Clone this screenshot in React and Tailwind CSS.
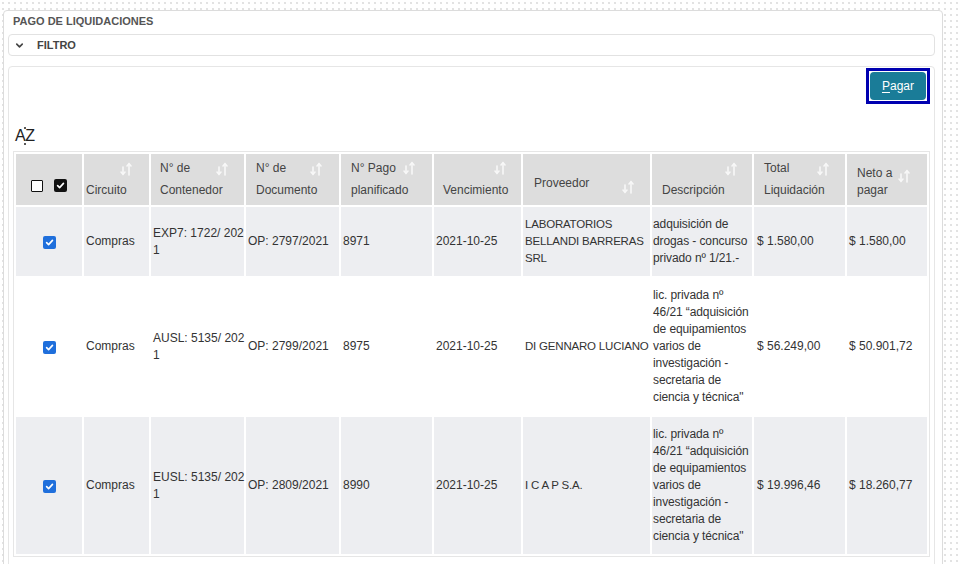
import { ChevronDown } from 'lucide-react';

const columns = [
  { key: 'check', w: 'w-[66px]' },
  { key: 'circuito', w: 'w-[65px]', lines: ['Circuito'], pl: 'pl-[2px]', icon: 'top-[8px] right-[16px]' },
  { key: 'contenedor', w: 'w-[93px]', lines: ['N° de', 'Contenedor'], pl: 'pl-[9px]', icon: 'top-[8px] right-[15px]' },
  { key: 'documento', w: 'w-[93px]', lines: ['N° de', 'Documento'], pl: 'pl-[10px]', icon: 'top-[8px] right-[16px]' },
  { key: 'pago', w: 'w-[91px]', lines: ['N° Pago', 'planificado'], pl: 'pl-[10px]', icon: 'top-[7px] right-[16px]' },
  { key: 'venc', w: 'w-[87px]', lines: ['Vencimiento'], pl: 'pl-[9px]', icon: 'top-[7px] right-[14px]' },
  { key: 'prov', w: 'w-[127px]', lines: ['Proveedor'], pl: 'pl-[11px]', pb: 'pb-[11px]', icon: 'top-[26px] right-[15px]' },
  { key: 'desc', w: 'w-[100px]', lines: ['Descripción'], pl: 'pl-[10px]', icon: 'top-[8px] right-[14px]' },
  { key: 'total', w: 'w-[91px]', lines: ['Total', 'Liquidación'], pl: 'pl-[10px]', icon: 'top-[8px] right-[15px]' },
  { key: 'neto', w: 'w-[80px]', lines: ['Neto a', 'pagar'], pl: 'pl-[10px]', pb: 'pb-[6px]', leading: 'leading-[17px]', icon: 'top-[15px] right-[16px]' },
];

const descLarga = [
  'lic. privada nº',
  '46/21 “adquisición',
  'de equipamientos',
  'varios de',
  'investigación -',
  'secretaria de',
  'ciencia y técnica"',
];

const rows = [
  {
    contenedor: ['EXP7: 1722/ 202', '1'],
    documento: 'OP: 2797/2021',
    pago: '8971',
    proveedor: ['LABORATORIOS', 'BELLANDI BARRERAS', 'SRL'],
    descripcion: ['adquisición de', 'drogas - concurso', 'privado nº 1/21.-'],
    total: '$ 1.580,00',
    neto: '$ 1.580,00',
  },
  {
    contenedor: ['AUSL: 5135/ 202', '1'],
    documento: 'OP: 2799/2021',
    pago: '8975',
    proveedor: ['DI GENNARO LUCIANO'],
    descripcion: descLarga,
    total: '$ 56.249,00',
    neto: '$ 50.901,72',
  },
  {
    contenedor: ['EUSL: 5135/ 202', '1'],
    documento: 'OP: 2809/2021',
    pago: '8990',
    proveedor: ['I C A P S.A.'],
    descripcion: descLarga,
    total: '$ 19.996,46',
    neto: '$ 18.260,77',
  },
];

function SortIcon({ className }) {
  return (
    <svg className={className} width="14" height="14" viewBox="0 0 14 14" fill="none" stroke="#f8f8f8" strokeWidth="1.6" strokeLinecap="round">
      <line x1="4" y1="5" x2="4" y2="12" />
      <polyline points="2,10 4,12.3 6,10" />
      <line x1="10" y1="13" x2="10" y2="2" />
      <polyline points="8,4 10,1.7 12,4" />
    </svg>
  );
}

function Lines({ lines }) {
  return lines.map((l, i) => (
    <span key={i} className="block whitespace-nowrap">{l}</span>
  ));
}

function BlueCheck() {
  return (
    <span className="inline-flex w-[13px] h-[13px] rounded-[2px] bg-[#1f6fdc] items-center justify-center align-middle">
      <svg width="9" height="9" viewBox="0 0 10 10" fill="none" stroke="white" strokeWidth="1.8" strokeLinecap="round" strokeLinejoin="round">
        <polyline points="1.8,5.2 4,7.4 8.3,2.6" />
      </svg>
    </span>
  );
}

export default function App() {
  return (
    <div className="min-h-screen bg-white bg-[radial-gradient(circle,#e2e2e2_0.7px,transparent_1px)] bg-size-[6px_6px] pt-[10px] pl-[3px] pr-[19px] overflow-hidden font-['Liberation_Sans',Arial,sans-serif]">
      <div className="bg-white border border-[#dcdcdc] rounded-[4px] pl-[4px] pr-[7px] pt-[2px] h-[600px]">
        <div className="pl-[5px] pt-[1px] pb-[6px] text-[11px] leading-[14px] font-bold text-[#555]">PAGO DE LIQUIDACIONES</div>

        <div className="h-[22px] border border-[#e2e2e2] rounded-[4px] flex items-center pl-[5px] gap-[12px] text-[11px] font-bold text-[#444]">
          <ChevronDown className="w-[11px] h-[11px]" strokeWidth={3.5} />
          <span>FILTRO</span>
        </div>

        <div className="mt-[10px] border border-[#e6e6e6] rounded-[4px] pl-[4px] pr-[4px] pt-[1px] h-[540px]">
          <div className="flex justify-end">
            <div className="border-[3px] border-[#0000b0] p-[1px]">
              <button className="w-[56px] h-[28px] rounded-[4px] bg-[#1a7c98] text-white text-[12px] leading-none">
                <span className="underline underline-offset-2">P</span>agar
              </button>
            </div>
          </div>

          <div className="mt-[20px] pl-[2px] h-[24px] flex items-center">
            <span className="relative text-[16px] leading-[24px] font-medium text-[#222] tracking-[-0.5px]">
              AZ
              <span className="absolute left-[9px] top-[3px] w-[2px] h-[2px] rounded-full bg-[#222]" />
              <span className="absolute left-[9px] bottom-[3px] w-[2px] h-[2px] rounded-full bg-[#222]" />
            </span>
          </div>

          <table className="mt-[3px] w-[917px] table-fixed border-separate border-spacing-[2px] border border-[#e6e6e6] text-[12px] text-[#333]">
            <colgroup>
              {columns.map(c => <col key={c.key} className={c.w} />)}
            </colgroup>
            <thead>
              <tr>
                {columns.map(c => c.key === 'check' ? (
                  <th key={c.key} className="h-[51px] bg-[#dddddd] align-bottom p-0">
                    <div className="flex items-center justify-center gap-[11px] pb-[13px]">
                      <span className="w-[12px] h-[12px] border-[1.5px] border-[#111] rounded-[1px] bg-white" />
                      <span className="w-[13px] h-[13px] bg-[#111] rounded-[2px] flex items-center justify-center">
                        <svg width="9" height="9" viewBox="0 0 10 10" fill="none" stroke="white" strokeWidth="1.8" strokeLinecap="round" strokeLinejoin="round">
                          <polyline points="1.8,5.2 4,7.4 8.3,2.6" />
                        </svg>
                      </span>
                    </div>
                  </th>
                ) : (
                  <th key={c.key} className={`relative h-[51px] bg-[#dddddd] align-bottom p-0 text-left font-normal text-[#444] ${c.pl}`}>
                    <div className={`${c.pb || 'pb-[4px]'} ${c.leading || 'leading-[22px]'}`}>
                      <Lines lines={c.lines} />
                    </div>
                    <SortIcon className={`absolute ${c.icon}`} />
                  </th>
                ))}
              </tr>
            </thead>
            <tbody>
              {rows.map((r, i) => {
                const bg = i % 2 === 0 ? 'bg-[#edeef1]' : 'bg-white';
                const td = `${bg} align-middle px-[2px] py-[9px] leading-[17px] whitespace-nowrap`;
                return (
                  <tr key={i}>
                    <td className={`${bg} align-middle text-center`}><BlueCheck /></td>
                    <td className={td}>Compras</td>
                    <td className={td}><Lines lines={r.contenedor} /></td>
                    <td className={td}>{r.documento}</td>
                    <td className={td}>{r.pago}</td>
                    <td className={td}>2021-10-25</td>
                    <td className={`${td} text-[11.5px] tracking-[-0.2px]`}><Lines lines={r.proveedor} /></td>
                    <td className={`${td} pl-[1px] tracking-[-0.1px]`}><Lines lines={r.descripcion} /></td>
                    <td className={`${td} pl-[3px]`}>{r.total}</td>
                    <td className={td}>{r.neto}</td>
                  </tr>
                );
              })}
            </tbody>
          </table>
        </div>
      </div>
    </div>
  );
}
